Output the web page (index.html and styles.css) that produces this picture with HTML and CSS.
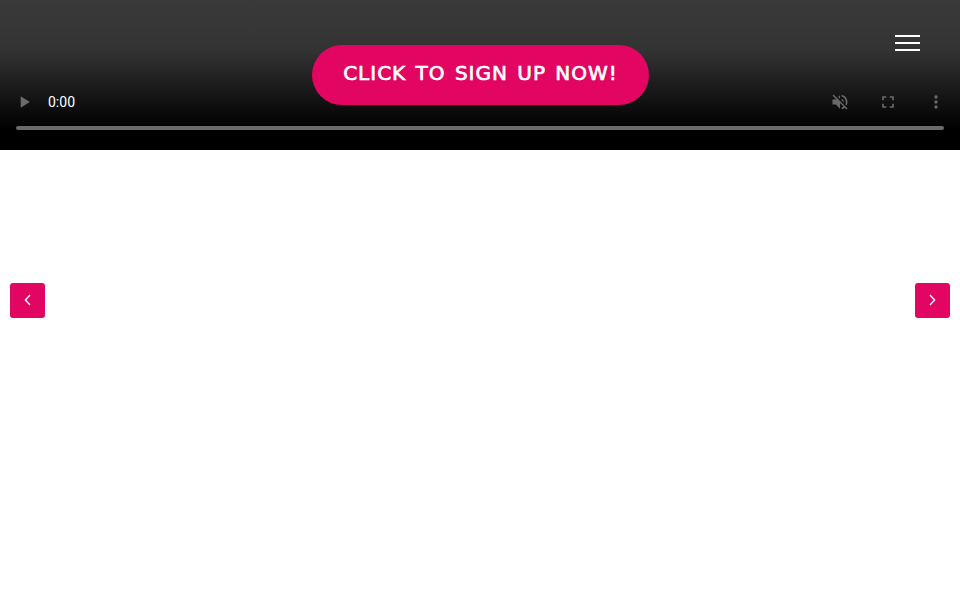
FILE: index.html
```html
<!DOCTYPE html>
<html lang="en">
<head>
<meta charset="utf-8">
<title>Sign up</title>
<link rel="stylesheet" href="styles.css">
</head>
<body>
<header class="hero">
  <a class="cta" href="#">CLICK TO SIGN UP NOW!</a>
  <button class="menu" aria-label="Menu"><span></span><span></span><span></span></button>
  <div class="controls">
    <div class="control-row">
      <svg class="icon play" viewBox="0 0 24 24"><path d="M8 5v14l11-7z"/></svg>
      <span class="time">0:00</span>
      <span class="spacer"></span>
      <svg class="icon" viewBox="0 0 24 24"><path d="M16.5 12A4.5 4.5 0 0 0 14 7.97v2.21l2.45 2.45c.03-.2.05-.41.05-.63zM19 12c0 .94-.2 1.82-.54 2.64l1.51 1.51A8.8 8.8 0 0 0 21 12c0-4.28-2.99-7.86-7-8.77v2.06c2.89.86 5 3.54 5 6.71zM4.27 3 3 4.27 7.73 9H3v6h4l5 5v-6.73l4.25 4.25c-.67.52-1.42.93-2.25 1.18v2.06a8.99 8.99 0 0 0 3.69-1.81L19.73 21 21 19.73l-9-9L4.27 3zM12 4 9.91 6.09 12 8.18V4z"/></svg>
      <svg class="icon" viewBox="0 0 24 24"><path d="M7 14H5v5h5v-2H7v-3zm-2-4h2V7h3V5H5v5zm12 7h-3v2h5v-5h-2v3zM14 5v2h3v3h2V5h-5z"/></svg>
      <svg class="icon" viewBox="0 0 24 24"><path d="M12 8a2 2 0 1 0 0-4 2 2 0 0 0 0 4zm0 2a2 2 0 1 0 0 4 2 2 0 0 0 0-4zm0 6a2 2 0 1 0 0 4 2 2 0 0 0 0-4z"/></svg>
    </div>
    <div class="track"></div>
  </div>
</header>
<main class="slider">
  <button class="arrow prev" aria-label="Previous"><svg viewBox="0 0 12 12"><path d="M8 1 3.400 6 8 11"/></svg></button>
  <button class="arrow next" aria-label="Next"><svg viewBox="0 0 12 12"><path d="M3 1l4.600 5L3 11"/></svg></button>
</main>
</body>
</html>
```
FILE: styles.css
```css
* { box-sizing: border-box; }
html, body { margin: 0; height: 100%; background: #fff; overflow: hidden; }
body { display: flex; flex-direction: column; font-family: "Roboto", "Liberation Sans", sans-serif; }

.hero {
  position: relative;
  height: 150px;
  flex: none;
  display: flex;
  flex-direction: column;
  justify-content: flex-end;
  background: linear-gradient(to bottom, #3a3a3a 0, #333 50px, #0c0c0c 110px, #000 130px, #000 150px);
}

.cta {
  position: absolute;
  left: 312px;
  top: 45px;
  width: 337px;
  height: 60px;
  border-radius: 30px;
  background: #e20562;
  color: #fff;
  font: 400 20px/56px "DejaVu Sans", sans-serif;
  -webkit-text-stroke: 0.7px #fff;
  letter-spacing: 1px;
  word-spacing: 2px;
  text-align: center;
  text-decoration: none;
  white-space: nowrap;
}

.menu {
  position: absolute;
  left: 895px;
  top: 35px;
  width: 25px;
  height: 16px;
  padding: 0;
  border: 0;
  background: none;
  display: flex;
  flex-direction: column;
  justify-content: space-between;
}
.menu span { display: block; height: 2px; background: #fff; }

.controls { padding: 0 16px 20px; }
.control-row { display: flex; align-items: center; height: 24px; margin-bottom: 12px; margin-right: -2px; }
.icon { width: 20px; height: 20px; fill: #6a6a6a; flex: none; }
.play { margin-left: -2px; }
.time { margin-left: 14px; color: #fff; font-size: 14px; line-height: 24px; }
.spacer { flex: 1; }
.control-row .icon + .icon { margin-left: 28px; }
.track { height: 4px; border-radius: 2px; background: #6a6a6a; }

.slider { position: relative; flex: 1; background: #fff; }
.arrow {
  position: absolute;
  top: 133px;
  width: 35px;
  height: 35px;
  padding: 0 0 1px;
  border: 0;
  border-radius: 3px;
  background: #e20562;
  display: flex;
  align-items: center;
  justify-content: center;
}
.arrow svg { width: 12px; height: 12px; fill: none; stroke: #fff; stroke-width: 1.4; }
.prev { left: 10px; }
.next { right: 10px; }
```
